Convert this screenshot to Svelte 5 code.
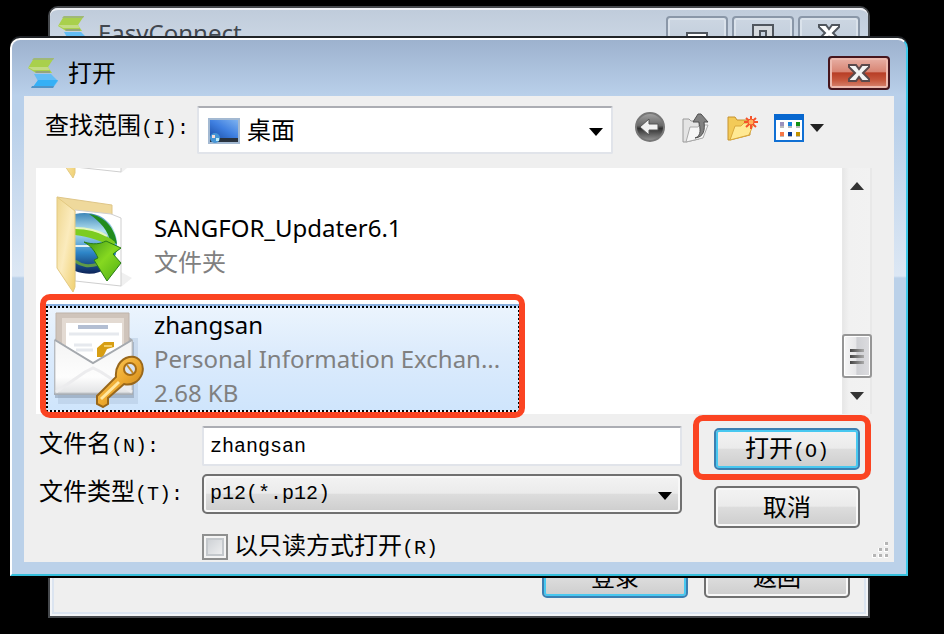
<script>
  let folder = $state('desktop');
  let fileName = $state('zhangsan');
  let fileType = $state('p12');
  let readOnly = $state(false);

  const windowButtons = ['minimize', 'maximize', 'close'];
</script>

{#snippet logo()}
  <svg class="logo" viewBox="0 0 30 30" aria-hidden="true">
    <path d="M6 0h20l-6 9 4 6H8L0 10z" fill="#a9d04c" />
    <path d="M6 0h20l-1 2H4z" fill="#9fb878" />
    <path d="M0 9h20l2 3H5z" fill="#c3dc84" />
    <path d="M7 13h15v2H8z" fill="#93a57c" />
    <path d="M6 16h17l7 7-5 7H4l6-7z" fill="#63bdf5" />
    <path d="M10 22h20l-5 7H5z" fill="#35b0f6" />
    <path d="M4 28h22l-1 2H3z" fill="#4f94c8" />
  </svg>
{/snippet}

{#snippet cross(fill, stroke)}
  <svg class="cross" viewBox="0 0 22 18" aria-hidden="true">
    <path d="M1 1h7l3 4 3-4h7v2l-6 6 6 6v2h-7l-3-4-3 4H1v-2l6-6-6-6z" {fill} {stroke} stroke-width="2" />
  </svg>
{/snippet}

{#snippet folderIcon(globe)}
  <svg class="file-icon" viewBox="0 0 90 98" aria-hidden="true">
    <defs>
      <linearGradient id="flap" x1="0" x2="1" y1="0" y2="1">
        <stop offset="0" stop-color="#eed68e" />
        <stop offset=".5" stop-color="#fbebbd" />
        <stop offset="1" stop-color="#f0d070" />
      </linearGradient>
      <linearGradient id="ball" x1="0" x2="0" y1="0" y2="1">
        <stop offset="0" stop-color="#3d86b8" />
        <stop offset=".3" stop-color="#b6e2f2" />
        <stop offset=".65" stop-color="#2e86c8" />
        <stop offset="1" stop-color="#0c2358" />
      </linearGradient>
      <linearGradient id="arrow" x1="0" x2="1" y1="0" y2="1">
        <stop offset="0" stop-color="#3c9418" />
        <stop offset=".5" stop-color="#86d820" />
        <stop offset="1" stop-color="#4fae14" />
      </linearGradient>
    </defs>
    <path d="M67 76 78 82 67 91z" fill="#f0f0f0" />
    <path d="M3 1 58 9v14L20 19z" fill="#efd99c" stroke="#dfc688" />
    <path d="M21 14 57 18l10 4v68l-46-5z" fill="#fff" stroke="#cfcfcf" />
    {#if globe}
      <path d="M21 18c24-5 42 9 42 31 0 21-18 35-42 26z" fill="url(#ball)" />
      <path d="M35 18c15 2 26 13 28 30l-7-3c-2-10-9-19-21-27z" fill="#218c1d" />
      <path d="M21 32c17 1 29 5 40 14l-1 7c-12-9-25-12-39-14z" fill="#7ccc20" />
      <path d="M21 32c13 0 22 2 32 8" fill="none" stroke="#e4f7bc" stroke-width="2" />
      <path d="M21 50h16" stroke="#e3f1f4" stroke-width="2" />
      <path d="M21 65c7 5 13 6 24 3" stroke="#5f9a48" stroke-width="3" fill="none" />
      <path d="M30 46c10 3 16 2 22-1l15 7-8 6 8 9-14 18-13-21 4-2c-3-7-7-12-14-16z" fill="url(#arrow)" stroke="#287c15" />
    {/if}
    <path d="M3 1 21 15v76l-2 5L3 72z" fill="url(#flap)" stroke="#e3c981" />
  </svg>
{/snippet}

{#snippet certificateIcon()}
  <svg class="file-icon" viewBox="0 0 90 98" aria-hidden="true">
    <defs>
      <linearGradient id="paper" x1="0" x2="0" y1="0" y2="1">
        <stop offset="0" stop-color="#f4f4f4" />
        <stop offset=".7" stop-color="#fdfdfd" />
        <stop offset="1" stop-color="#e2e3e5" />
      </linearGradient>
      <linearGradient id="gold" x1="0" x2="1" y1="0" y2="1">
        <stop offset="0" stop-color="#ffd76a" />
        <stop offset=".5" stop-color="#eeaa30" />
        <stop offset="1" stop-color="#b87410" />
      </linearGradient>
    </defs>
    <path d="M4 28h80v66H4z" fill="#a9bed6" opacity=".4" />
    <path d="M1 32h79v56H1z" fill="#8e9eb2" opacity=".6" />
    <path d="M0 30 7 24h64l8 6v55H0z" fill="#a8aeb5" />
    <path d="M2 3h73v54H2z" fill="#cfc4bb" stroke="#bfb3aa" stroke-width="1" />
    <path d="M8 8h62v50H8z" fill="#e3dad2" />
    <path d="M12 13h56v45H12z" fill="#fff" />
    <path d="M24 17h30" stroke="#b3bed2" stroke-width="4" />
    <path d="M15 24h50M20 35h18M22 40h17" stroke="#e6e9ee" stroke-width="3" />
    <path d="M43 47V38l7-6h10v5l-7 2-4 8z" fill="#d79e14" />
    <path d="M50 36h8" stroke="#f4d068" stroke-width="2" />
    <path d="M1 30 39 53 78 30v53H1z" fill="url(#paper)" stroke="#c5c8cc" />
    <path d="M1 30 39 53 78 30" fill="none" stroke="#a5a9ae" stroke-width="2" />
    <path d="M2 82 31 62l8-4 8 4 31 20" fill="none" stroke="#ececee" stroke-width="3" />
    <path d="M75 47c10-2 16 7 13 17-3 8-11 12-18 10L54 88v6l-5 3-6-3v-8l19-19c-1-9 4-18 13-20z" fill="url(#gold)" stroke="#99671a" stroke-width="2" />
    <ellipse cx="76" cy="59" rx="6" ry="6" fill="#d7e4f3" stroke="#a66d16" stroke-width="2" />
    <path d="m73 55 6 8" stroke="#c48a28" stroke-width="2" />
    <path d="m47 89 18-17" stroke="#ffe7a0" stroke-width="3" />
  </svg>
{/snippet}

<main class="desktop">
  <section class="window back-window" aria-label="EasyConnect">
    <header class="back-title">
      {@render logo()}
      <h1>EasyConnect</h1>
      <div class="window-buttons">
        {#each windowButtons as kind}
          <button type="button" aria-label={kind}>
            {#if kind === 'minimize'}
              <svg viewBox="0 0 22 18" aria-hidden="true"><path d="M1 9h20v6H1z" fill="#fff" stroke="#50565e" stroke-width="2" /></svg>
            {:else if kind === 'maximize'}
              <svg viewBox="0 0 22 18" aria-hidden="true"><path d="M1 1h20v16H1zM8 7v6h6V7z" fill="#d5d9dd" fill-rule="evenodd" stroke="#50565e" stroke-width="2" /></svg>
            {:else}
              {@render cross('#fff', '#50565e')}
            {/if}
          </button>
        {/each}
      </div>
    </header>
    <footer class="back-actions">
      <button type="button" class="push primary">登录</button>
      <button type="button" class="push">返回</button>
    </footer>
  </section>

  <section class="window dialog" role="dialog" aria-labelledby="dialog-title">
    <header class="dialog-title">
      {@render logo()}
      <h2 id="dialog-title">打开</h2>
      <button type="button" class="close" aria-label="close">{@render cross('#f4f4f4', '#5b4a4c')}</button>
    </header>

    <form class="client" onsubmit={(event) => event.preventDefault()}>
      <div class="look-in">
        <label for="folder">查找范围<span class="latin">(I):</span></label>
        <div class="combo place">
          <svg class="place-icon" viewBox="0 0 32 26" aria-hidden="true">
            <defs>
              <linearGradient id="screen" x1="0" x2="1" y1="1" y2="0">
                <stop offset="0" stop-color="#1b4fa8" />
                <stop offset=".5" stop-color="#3f7fe0" />
                <stop offset="1" stop-color="#7db2f0" />
              </linearGradient>
            </defs>
            <path d="M0 0h32v26H0z" fill="#a3b9d2" />
            <path d="M2 2h28v18H2z" fill="url(#screen)" />
            <path d="M2 20h28v4H2z" fill="#29323e" />
            <circle cx="7" cy="20" r="5" fill="#4695d5" />
            <path d="M4 17h3v3H4z" fill="#f6ddd7" /><path d="M8 20h3v3H8z" fill="#bdebf6" />
          </svg>
          <select id="folder" bind:value={folder}>
            <option value="desktop">桌面</option>
          </select>
          <svg class="drop" viewBox="0 0 14 8" aria-hidden="true"><path d="M0 0h14L7 8z" /></svg>
        </div>
        <div class="tools">
          <button type="button" aria-label="back">
            <svg width="32" height="32" viewBox="0 0 32 32" aria-hidden="true">
              <defs>
                <linearGradient id="disc" x1="0" x2="0" y1="0" y2="1">
                  <stop offset="0" stop-color="#a4a4a4" />
                  <stop offset=".45" stop-color="#686868" />
                  <stop offset=".55" stop-color="#303030" />
                  <stop offset="1" stop-color="#989898" />
                </linearGradient>
              </defs>
              <circle cx="16" cy="15" r="14" fill="url(#disc)" stroke="#777" stroke-width="2" />
              <path d="m6 15 9-8v5h9v6h-9v5z" fill="#f2f2f2" stroke="#555" />
            </svg>
          </button>
          <button type="button" aria-label="up">
            <svg width="28" height="32" viewBox="0 0 28 32" aria-hidden="true">
              <path d="M1 7h6l2 2h8v18L4 30H1z" fill="#e4e4e4" stroke="#9a9a9a" />
              <path d="m4 30 4-15h8l2-2h8l-5 13z" fill="#f6f6f6" stroke="#aaa" />
              <path d="M13 26c7-2 5-10 4-16h-6l5-8h3l7 8h-4c1 8 0 15-9 16z" fill="#808080" stroke="#505050" />
            </svg>
          </button>
          <button type="button" aria-label="new folder" class="new-folder">
            <svg width="32" height="32" viewBox="0 0 32 32" aria-hidden="true">
              <path d="M2 5h7l2 3h13v15L4 28H2z" fill="#f3ca58" stroke="#c6922e" />
              <path d="m4 28 5-14h6l3-3h10l-5 12z" fill="#ffe993" stroke="#d9a93d" />
              <path d="M25 4v13M20 6l10 9M30 6l-10 9M18 10h14" stroke="#f5532b" stroke-width="2" />
              <circle cx="25" cy="10" r="3" fill="#ffb35c" stroke="#f5532b" />
            </svg>
          </button>
          <button type="button" aria-label="view" class="view">
            <svg width="30" height="28" viewBox="0 0 30 28" aria-hidden="true">
              <path d="M1 1h28v26H1z" fill="#fff" stroke="#1070d4" stroke-width="2" />
              <path d="M0 0h30v6H0z" fill="#0767cf" />
              <path d="M6 8h4v4H6z" fill="#9a91bd" />
              <path d="M14 8h4v4h-4z" fill="#1583db" /><path d="M22 8h4v4h-4z" fill="#129114" />
              <path d="M6 18h4v4H6z" fill="#f57747" /><path d="M14 18h4v4h-4z" fill="#073b91" />
              <path d="M22 18h4v4h-4z" fill="#c29200" />
              <path d="M6 12h4v2H6zM14 12h4v2h-4zM22 12h4v2h-4zM6 22h4v1H6zM14 22h4v1h-4zM22 22h4v1h-4z" fill="#bbb" />
            </svg>
            <svg width="14" height="8" viewBox="0 0 14 8" aria-hidden="true"><path d="M0 0h14L7 8z" fill="#222" /></svg>
          </button>
        </div>
      </div>

      <div class="browser">
        <ul class="files">
          <li class="file">{@render folderIcon(false)}</li>
          <li class="file">
            {@render folderIcon(true)}
            <div class="details">
              <strong>SANGFOR_Updater6.1</strong>
              <span>文件夹</span>
            </div>
          </li>
          <li class="file selected">
            {@render certificateIcon()}
            <div class="details">
              <strong>zhangsan</strong>
              <span>Personal Information Exchan...</span>
              <span>2.68 KB</span>
            </div>
          </li>
        </ul>
        <div class="scrollbar">
          <button type="button" aria-label="scroll up">
            <svg viewBox="0 0 14 8" aria-hidden="true"><path d="M0 8h14L7 0z" /></svg>
          </button>
          <div class="thumb"><i></i><i></i><i></i></div>
          <button type="button" aria-label="scroll down">
            <svg viewBox="0 0 14 8" aria-hidden="true"><path d="M0 0h14L7 8z" /></svg>
          </button>
        </div>
        <div class="mark file-mark"></div>
      </div>

      <div class="bottom">
        <div class="fields">
          <label for="file-name">文件名<span class="latin">(N):</span></label>
          <input id="file-name" type="text" bind:value={fileName} />
          <label for="file-type">文件类型<span class="latin">(T):</span></label>
          <div class="combo type">
            <select id="file-type" bind:value={fileType}>
              <option value="p12">p12(*.p12)</option>
            </select>
            <svg class="drop" viewBox="0 0 14 8" aria-hidden="true"><path d="M0 0h14L7 8z" /></svg>
          </div>
          <label class="read-only">
            <input type="checkbox" bind:checked={readOnly} />
            <span>以只读方式打开<span class="latin">(R)</span></span>
          </label>
        </div>
        <div class="actions">
          <div class="marked">
            <button type="submit" class="push primary">打开<span class="latin">(O)</span></button>
            <div class="mark button-mark"></div>
          </div>
          <button type="button" class="push">取消</button>
        </div>
        <svg class="grip" viewBox="0 0 16 16" aria-hidden="true">
          <path d="M12 0h4v4h-4zM6 6h4v4H6zM12 6h4v4h-4zM0 12h4v4H0zM6 12h4v4H6zM12 12h4v4h-4z" fill="#fff" />
          <path d="M13 0h3v3h-3zM7 6h3v3H7zM13 6h3v3h-3zM1 12h3v3H1zM7 12h3v3H7zM13 12h3v3h-3z" fill="#b5b5b5" />
        </svg>
      </div>
    </form>
  </section>
</main>

<style>
  :global(body) {
    margin: 0;
    background: #000;
  }

  .desktop,
  .desktop * {
    box-sizing: border-box;
  }

  .desktop {
    position: relative;
    min-height: 100vh;
    overflow: hidden;
    background: #000;
    color: #000;
    font: 24px/34px 'Noto Sans', 'Noto Sans CJK SC', sans-serif;
  }

  button,
  input,
  select {
    margin: 0;
    padding: 0;
    border: 0;
    background: none;
    color: inherit;
    font: inherit;
    appearance: none;
  }

  h1,
  h2 {
    margin: 0;
    font: inherit;
  }

  .latin {
    font-family: 'Liberation Mono', monospace;
    font-size: 20px;
  }

  .logo {
    flex: none;
    width: 30px;
    height: 30px;
  }

  .cross {
    width: 22px;
    height: 18px;
  }

  .window {
    position: absolute;
    display: flex;
    flex-direction: column;
  }

  .back-window {
    top: 6px;
    right: 74px;
    bottom: 16px;
    left: 48px;
    justify-content: space-between;
    border: 2px solid #45484c;
    border-radius: 10px 10px 0 0;
    background: #efefef;
    box-shadow: inset 0 0 0 2px #f2f4f7, inset 0 0 0 4px #dbe4f0;
  }

  .back-title {
    display: flex;
    align-items: flex-start;
    height: 50px;
    padding: 6px 8px 0;
    border-top: 2px solid #eef1f5;
    border-radius: 8px 8px 0 0;
    background: linear-gradient(#c0ccdb, #d1dce9);
    color: #41474f;
  }

  .back-title h1 {
    flex: 1;
    padding-left: 10px;
  }

  .window-buttons {
    display: flex;
    gap: 4px;
  }

  .window-buttons button {
    display: flex;
    justify-content: center;
    width: 62px;
    height: 34px;
    padding-top: 6px;
    border: 2px solid #8a97a8;
    border-radius: 4px;
    background: linear-gradient(#ccd6e2, #c0ccda);
    box-shadow: inset 0 0 0 2px #dae2eb;
  }

  .window-buttons svg {
    width: 22px;
    height: 18px;
  }

  .back-actions {
    display: flex;
    justify-content: flex-end;
    gap: 16px;
    padding: 0 18px 18px;
  }

  .dialog {
    top: 38px;
    right: 36px;
    left: 10px;
    padding: 0 12px 12px 12px;
    border: 2px solid #fff;
    border-right-color: #3fc8e8;
    border-bottom-color: #35bfdc;
    border-radius: 10px 10px 0 0;
    background: linear-gradient(#9db2ce, #b9d0ea 56px, #b9d0ea 80px, #dce7f4 234px, #dce7f4 236px, #bbd1e9 238px);
    box-shadow: 0 -2px 0 #202327, 0 2px 0 #000;
  }

  .dialog-title {
    display: flex;
    align-items: center;
    gap: 10px;
    height: 56px;
    padding: 10px 4px 0;
  }

  .dialog-title h2 {
    flex: 1;
  }

  .close {
    display: flex;
    align-items: center;
    justify-content: center;
    width: 62px;
    height: 34px;
    border: 2px solid #46161d;
    border-radius: 4px;
    background: linear-gradient(#e8b0a5, #d88675 45%, #b83e26 50%, #c7593f 75%, #d98874);
    box-shadow: inset 0 0 0 2px #edb9ae;
  }

  .client {
    background: #efefef;
  }

  .look-in {
    display: flex;
    align-items: center;
    padding: 10px 70px 0 21px;
  }

  .look-in > label {
    width: 152px;
    padding-bottom: 6px;
    white-space: nowrap;
  }

  .combo {
    position: relative;
    flex: 1;
    min-width: 0;
  }

  .combo select {
    display: block;
    width: 100%;
  }

  .drop {
    position: absolute;
    top: calc(50% - 2px);
    right: 10px;
    width: 14px;
    height: 8px;
    pointer-events: none;
  }

  .place select {
    height: 48px;
    padding: 0 36px 0 48px;
    border: 2px solid #e1e4ea;
    border-top-color: #abadb3;
    border-radius: 2px;
    background: #fff;
    line-height: 40px;
  }

  .place-icon {
    position: absolute;
    top: 12px;
    left: 11px;
    width: 32px;
    height: 26px;
  }

  .tools {
    display: flex;
    align-items: center;
    gap: 16px;
    padding: 0 0 4px 21px;
  }

  .tools button {
    display: flex;
    align-items: center;
    gap: 6px;
  }

  .tools svg {
    display: block;
  }

  .browser {
    position: relative;
    display: flex;
    height: 246px;
    margin: 14px 22px 0 12px;
    background: #fff;
  }

  .files {
    display: flex;
    flex: 1;
    flex-direction: column;
    justify-content: flex-end;
    gap: 8px;
    margin: 0;
    padding: 0 0 2px 10px;
    overflow: hidden;
    list-style: none;
  }

  .file {
    display: flex;
    flex: none;
    align-items: center;
    gap: 10px;
    width: 474px;
    height: 106px;
    padding: 0 6px;
    border: 2px dotted transparent;
  }

  .selected {
    border-color: #000;
    background: linear-gradient(#ebf4fd, #dcebfc 45%, #cfe5fc);
    box-shadow: 0 -2px 0 #87aede;
  }

  .file-icon {
    flex: none;
    width: 90px;
    height: 98px;
  }

  .details {
    display: flex;
    flex-direction: column;
    white-space: nowrap;
  }

  .details strong {
    font-weight: 400;
  }

  .details span {
    color: #808080;
  }

  .scrollbar {
    display: flex;
    flex-direction: column;
    width: 30px;
    border: 2px solid #e8e8e8;
    border-width: 0 2px;
    background: linear-gradient(90deg, #e9e9e9, #f1f1f1 20%, #f2f2f2);
  }

  .scrollbar button {
    display: flex;
    align-items: center;
    justify-content: center;
    height: 36px;
  }

  .scrollbar svg {
    width: 14px;
    height: 8px;
    fill: #333;
  }

  .thumb {
    display: flex;
    flex-direction: column;
    align-items: center;
    justify-content: center;
    gap: 3px;
    height: 44px;
    margin: auto -2px 0;
    border: 2px solid #969696;
    border-radius: 3px;
    background: linear-gradient(90deg, #f6f6f6, #e7e7e9 45%, #cfd0d4 50%, #dcdcdf);
    box-shadow: inset 0 0 0 1px #fff;
  }

  .thumb i {
    width: 14px;
    height: 3px;
    background: linear-gradient(90deg, #444, #aaa);
  }

  .mark {
    position: absolute;
    border: 6px solid #fb4422;
    border-radius: 10px;
    pointer-events: none;
  }

  .file-mark {
    top: 126px;
    bottom: -4px;
    left: 4px;
    width: 485px;
  }

  .bottom {
    position: relative;
    display: flex;
    gap: 32px;
    padding: 12px 34px 2px 15px;
  }

  .fields {
    display: grid;
    flex: 1;
    grid-template-columns: 163px 1fr;
    row-gap: 8px;
  }

  .fields > label {
    white-space: nowrap;
  }

  .fields > input,
  .type select {
    width: 100%;
    height: 40px;
    padding: 0 6px;
    font: 20px/36px 'Liberation Mono', monospace;
  }

  .fields > input {
    border: 2px solid #e1e4ea;
    border-top-color: #abadb3;
    border-radius: 2px;
    background: #fff;
  }

  .type select,
  .push {
    border: 2px solid #707070;
    border-radius: 5px;
    background: linear-gradient(#f3f3f3, #ebebeb 48%, #dddddd 50%, #cdcdcd);
    box-shadow: inset 0 0 0 2px #f8f8f8;
  }

  .push {
    display: block;
    width: 146px;
    height: 42px;
    line-height: 36px;
    text-align: center;
  }

  .push.primary {
    border-color: #3c7fb1;
    box-shadow: inset 0 0 0 2px #48c8f0;
  }

  .fields > .read-only {
    display: flex;
    grid-column: 2;
    align-items: center;
    gap: 6px;
    height: 26px;
    margin-top: 12px;
  }

  .read-only input {
    width: 26px;
    height: 26px;
    border: 2px solid #8e8f8f;
    background: linear-gradient(135deg, #c6cacf, #f6f6f6);
    box-shadow: inset 0 0 0 2px #f4f4f4, inset 0 0 0 4px #c4c8cc;
  }

  .read-only input:checked {
    background: #3c7fb1;
  }

  .actions {
    display: flex;
    flex-direction: column;
    gap: 16px;
    padding-top: 2px;
  }

  .marked {
    position: relative;
  }

  .button-mark {
    top: -13px;
    right: -11px;
    bottom: -10px;
    left: -21px;
  }

  .grip {
    position: absolute;
    right: 6px;
    bottom: 4px;
    width: 16px;
    height: 16px;
  }
</style>
